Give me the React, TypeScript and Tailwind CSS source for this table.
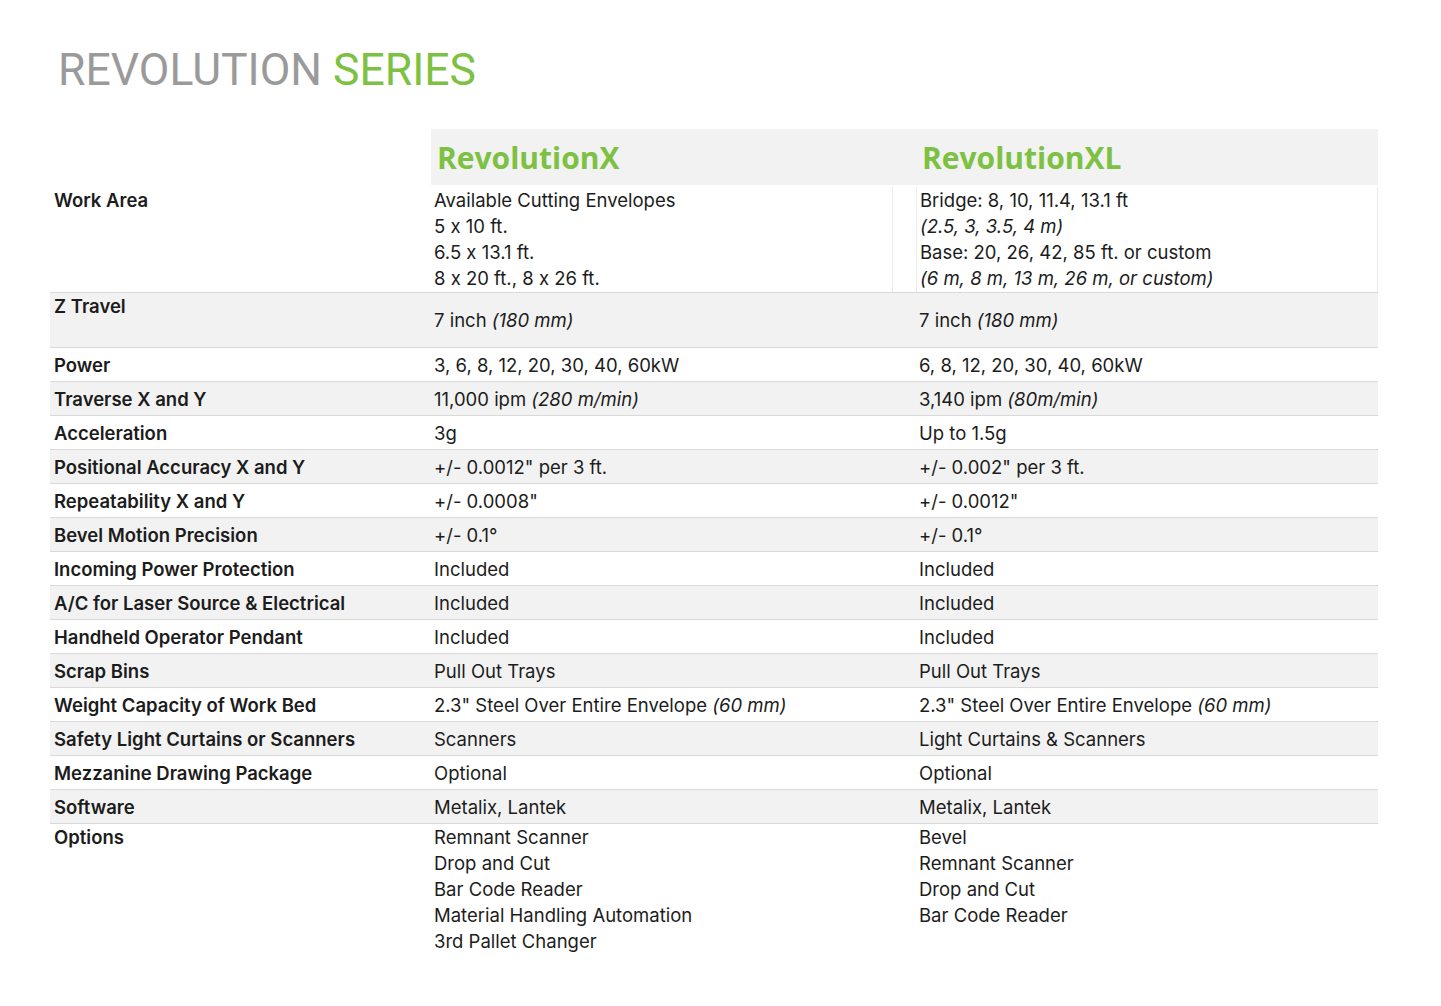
import React from "react";

type Row = {
  label: string;
  x: React.ReactNode;
  xl: React.ReactNode;
};

const rows: Row[] = [
  { label: "Power", x: "3, 6, 8, 12, 20, 30, 40, 60kW", xl: "6, 8, 12, 20, 30, 40, 60kW" },
  {
    label: "Traverse X and Y",
    x: (
      <>
        11,000 ipm <i>(280 m/min)</i>
      </>
    ),
    xl: (
      <>
        3,140 ipm <i>(80m/min)</i>
      </>
    ),
  },
  { label: "Acceleration", x: "3g", xl: "Up to 1.5g" },
  { label: "Positional Accuracy X and Y", x: '+/- 0.0012" per 3 ft.', xl: '+/- 0.002" per 3 ft.' },
  { label: "Repeatability X and Y", x: '+/- 0.0008"', xl: '+/- 0.0012"' },
  { label: "Bevel Motion Precision", x: "+/- 0.1°", xl: "+/- 0.1°" },
  { label: "Incoming Power Protection", x: "Included", xl: "Included" },
  { label: "A/C for Laser Source & Electrical", x: "Included", xl: "Included" },
  { label: "Handheld Operator Pendant", x: "Included", xl: "Included" },
  { label: "Scrap Bins", x: "Pull Out Trays", xl: "Pull Out Trays" },
  {
    label: "Weight Capacity of Work Bed",
    x: (
      <>
        2.3" Steel Over Entire Envelope <i>(60 mm)</i>
      </>
    ),
    xl: (
      <>
        2.3" Steel Over Entire Envelope <i>(60 mm)</i>
      </>
    ),
  },
  { label: "Safety Light Curtains or Scanners", x: "Scanners", xl: "Light Curtains & Scanners" },
  { label: "Mezzanine Drawing Package", x: "Optional", xl: "Optional" },
  { label: "Software", x: "Metalix, Lantek", xl: "Metalix, Lantek" },
];

const cols = "grid grid-cols-[381px_462px_23px_462px]";

export default function App() {
  return (
    <div className="min-h-[1006px] bg-white font-['Inter',sans-serif] [font-feature-settings:'calt'_0] text-[18.5px] text-[#1c1c1c]">
      <div className="pl-[58px] pt-[42px]">
        <h1 className="font-['Roboto',sans-serif] text-[44.5px] leading-[56px] font-normal text-[#9a9a9a]">
          REVOLUTION <span className="text-[#7dc142]">SERIES</span>
        </h1>
      </div>

      <div className="ml-[50px] mt-[31px] w-[1328px]">
        {/* header */}
        <div className={cols}>
          <div />
          <div className="col-span-3 h-[56px] bg-[#f2f2f2] flex items-center">
            <div className="w-[485px] pl-[6px] pt-[1px] font-['Open_Sans',sans-serif] text-[30px] font-bold text-[#7dc142]">
              RevolutionX
            </div>
            <div className="pl-[6px] pt-[1px] font-['Open_Sans',sans-serif] text-[30px] font-bold text-[#7dc142]">
              RevolutionXL
            </div>
          </div>
        </div>

        {/* work area */}
        <div className={`${cols} leading-[26px] pt-[2px]`}>
          <div className="pl-[4px] font-semibold">Work Area</div>
          <div className="pl-[3px] border-r border-[#ececec] pb-[1px]">
            <div>Available Cutting Envelopes</div>
            <div>5 x 10 ft.</div>
            <div>6.5 x 13.1 ft.</div>
            <div>8 x 20 ft., 8 x 26 ft.</div>
          </div>
          <div />
          <div className="pl-[3px] border-l border-r border-[#ececec]">
            <div>Bridge: 8, 10, 11.4, 13.1 ft</div>
            <div>
              <i>(2.5, 3, 3.5, 4 m)</i>
            </div>
            <div>Base: 20, 26, 42, 85 ft. or custom</div>
            <div>
              <i>(6 m, 8 m, 13 m, 26 m, or custom)</i>
            </div>
          </div>
        </div>

        {/* z travel */}
        <div className={`${cols} leading-[26px] h-[55px] bg-[#f2f2f2] border-t border-[#d9d9d9]`}>
          <div className="pl-[4px] font-semibold">Z Travel</div>
          <div className="pl-[3px] self-center">
            7 inch <i>(180 mm)</i>
          </div>
          <div />
          <div className="pl-[3px] self-center">
            7 inch <i>(180 mm)</i>
          </div>
        </div>

        {rows.map((r, i) => (
          <div
            key={r.label}
            className={`${cols} h-[34px] items-center border-t border-[#d9d9d9] leading-[26px] ${
              i % 2 === 1 ? "bg-[#f2f2f2]" : "bg-white"
            }`}
          >
            <div className="pl-[4px] font-semibold">{r.label}</div>
            <div className="pl-[3px]">{r.x}</div>
            <div />
            <div className="pl-[3px]">{r.xl}</div>
          </div>
        ))}

        {/* options */}
        <div className={`${cols} leading-[26px] border-t border-[#d9d9d9]`}>
          <div className="pl-[4px] font-semibold">Options</div>
          <div className="pl-[3px]">
            <div>Remnant Scanner</div>
            <div>Drop and Cut</div>
            <div>Bar Code Reader</div>
            <div>Material Handling Automation</div>
            <div>3rd Pallet Changer</div>
          </div>
          <div />
          <div className="pl-[3px]">
            <div>Bevel</div>
            <div>Remnant Scanner</div>
            <div>Drop and Cut</div>
            <div>Bar Code Reader</div>
          </div>
        </div>
      </div>
    </div>
  );
}
